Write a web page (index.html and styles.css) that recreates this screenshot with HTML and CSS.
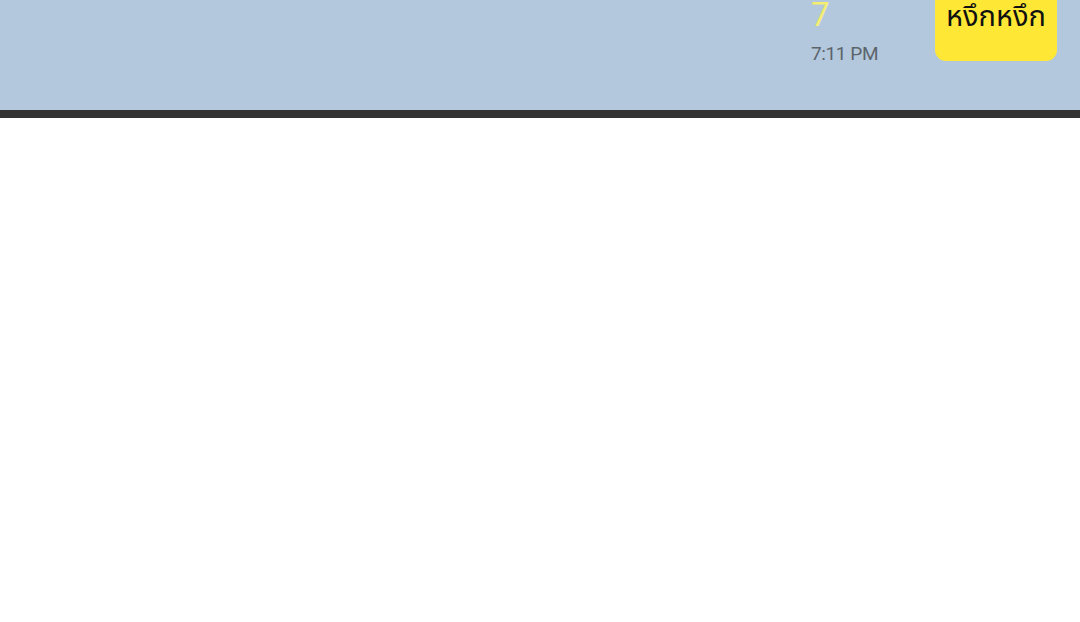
FILE: index.html
```html
<!DOCTYPE html>
<html lang="th">
<head>
<meta charset="utf-8">
<link rel="stylesheet" href="styles.css">
</head>
<body>
<div class="chat">
  <div class="row">
    <div class="meta">
      <div class="count">7</div>
      <div class="time">7:11 PM</div>
    </div>
    <div class="bubble">หงึกหงึก</div>
  </div>
</div>
<div class="divider"></div>
<div class="rest"></div>
</body>
</html>
```
FILE: styles.css
```css
html, body { margin: 0; padding: 0; background: #ffffff; }
body { width: 1080px; height: 622px; overflow: hidden; font-family: "Roboto", "Noto Sans", sans-serif; }
.chat {
  height: 110px;
  background: #b3c8dc;
  overflow: hidden;
  display: flex;
  flex-direction: column;
  justify-content: flex-end;
}
.row {
  display: flex;
  justify-content: flex-end;
  align-items: flex-end;
  padding: 0 23px 49px 0;
}
.meta {
  width: 124px;
  display: flex;
  flex-direction: column;
  align-items: flex-start;
}
.count {
  color: #f3ee72;
  font-size: 33px;
  line-height: 30px;
  font-weight: 400;
  margin-bottom: 17px;
  font-family: "Roboto", sans-serif;
}
.time {
  color: #5c646c;
  font-size: 19px;
  line-height: 14px;
  font-weight: 400;
  letter-spacing: -0.4px;
  font-family: "Roboto", sans-serif;
}
.bubble {
  width: 122px;
  box-sizing: border-box;
  background: #ffe835;
  border-radius: 11px;
  padding: 40px 0 28px;
  text-align: center;
  font-size: 29px;
  line-height: 32px;
  color: #111;
  font-family: "Noto Sans Thai", "Noto Sans", "DejaVu Sans", sans-serif;
}
.divider { height: 8px; background: #333333; }
.rest { height: 504px; background: #ffffff; }
```
